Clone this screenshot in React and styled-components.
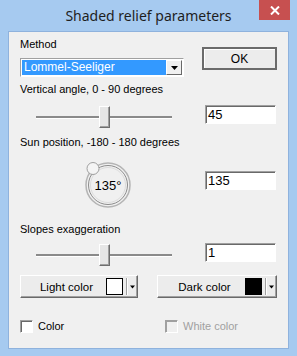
import React from 'react';
import styled, { createGlobalStyle } from 'styled-components';

const Global = createGlobalStyle`
  html, body { margin: 0; padding: 0; background: #a6caf0; }
  * { box-sizing: border-box; }
`;

const Frame = styled.div`
  width: 297px;
  height: 356px;
  background: #a6caf0;
  display: flex;
  flex-direction: column;
  font-family: "Liberation Sans", Arial, sans-serif;
`;

const TitleBar = styled.div`
  height: 31px;
  display: flex;
  align-items: flex-start;
  position: relative;
`;

const Title = styled.div`
  flex: 1;
  text-align: center;
  font-family: "Noto Sans", "Open Sans", sans-serif;
  font-size: 14px;
  line-height: 20px;
  padding-top: 6px;
  color: #1e1e1e;
`;

const Close = styled.div`
  position: absolute;
  right: 7px;
  top: 0;
  width: 31px;
  height: 20px;
  background: #c75050;
  color: #fff;
  display: flex;
  align-items: center;
  justify-content: center;
`;

const Client = styled.div`
  margin: 0 8px 7px 8px;
  flex: 1;
  background: #f0f0f0;
  border: 1px solid #8fb2dd;
  padding: 0 11px 0 11px;
  display: flex;
  flex-direction: column;
  font-size: 11px;
  color: #000;
`;

const Row = styled.div`
  display: flex;
  justify-content: space-between;
  align-items: ${(p) => p.$align || 'flex-start'};
  margin-top: ${(p) => p.$top || 0}px;
  height: ${(p) => p.$h}px;
`;

const Col = styled.div`
  display: flex;
  flex-direction: column;
`;

const Label = styled.div`
  font-size: 11px;
  line-height: 14px;
  height: 14px;
  white-space: nowrap;
  margin-top: ${(p) => p.$top || 0}px;
  color: ${(p) => (p.$disabled ? '#a0a0a0' : '#000')};
`;

const Combo = styled.div`
  margin-top: 7px;
  width: 164px;
  height: 19px;
  border: 1px solid;
  border-color: #a0a0a0 #fff #fff #a0a0a0;
  background: #fff;
  display: flex;
  padding: 1px;
`;

const ComboText = styled.div`
  flex: 1;
  background: #3399ff;
  color: #fff;
  font-size: 12px;
  line-height: 15px;
  padding-left: 2px;
`;

const ComboArrow = styled.div`
  width: 16px;
  background: #f0f0f0;
  border: 1px solid;
  border-color: #fff #696969 #696969 #fff;
  display: flex;
  align-items: center;
  justify-content: center;
`;

const OkButton = styled.div`
  width: 75px;
  height: 23px;
  margin-top: 10px;
  border: 2px solid #6b6b6b;
  background: #ececec;
  box-shadow: inset 1px 1px 0 #fff;
  display: flex;
  align-items: center;
  justify-content: center;
  font-size: 12px;
`;

const Field = styled.div`
  width: 71px;
  height: 19px;
  margin-top: ${(p) => p.$top || 0}px;
  margin-right: 1px;
  background: #fff;
  border: 1px solid;
  border-color: #a0a0a0 #fff #fff #a0a0a0;
  box-shadow: inset 1px 1px 0 #696969;
  font-size: 13px;
  line-height: 15px;
  padding: 1px 0 0 2px;
`;

const SliderBox = styled.div`
  width: 150px;
  height: 24px;
  margin-left: 16px;
  position: relative;
  display: flex;
  align-items: center;
`;

const Track = styled.div`
  width: 136px;
  height: 3px;
  border-top: 2px solid #8a8a8a;
  border-bottom: 1px solid #fff;
`;

const Thumb = styled.div`
  position: absolute;
  left: ${(p) => p.$x}px;
  top: ${(p) => p.$y}px;
  width: 11px;
  height: 22px;
  background: #e6e6e6;
  border: 1px solid;
  border-color: #fff #6e6e6e #6e6e6e #fff;
  box-shadow: inset -1px -1px 0 #a0a0a0;
`;

const DialBox = styled.div`
  width: 50px;
  height: 50px;
  margin-left: 64px;
`;

const SplitButton = styled.div`
  width: ${(p) => p.$w}px;
  height: 23px;
  display: flex;
  align-items: center;
  background: #ececec;
  border: 1px solid;
  border-color: #fff #696969 #696969 #fff;
  box-shadow: inset -1px -1px 0 #a0a0a0;
  font-size: 11.5px;
`;

const SplitLabel = styled.div`
  flex: 1;
  text-align: center;
  padding-left: ${(p) => p.$pad}px;
`;

const Swatch = styled.div`
  width: 17px;
  height: 17px;
  border: 1px solid #000;
  background: ${(p) => p.$color};
  margin-right: 3px;
`;

const SplitDivider = styled.div`
  width: 2px;
  height: 17px;
  border-left: 1px solid #a0a0a0;
  border-right: 1px solid #fff;
`;

const SplitArrow = styled.div`
  width: 8px;
  display: flex;
  justify-content: center;
  margin-right: 1px;
`;

const CheckWrap = styled.div`
  display: flex;
  align-items: center;
  gap: 5px;
  width: ${(p) => p.$w}px;
`;

const Box = styled.div`
  width: 13px;
  height: 13px;
  background: ${(p) => (p.$disabled ? '#f0f0f0' : '#fff')};
  border: 1px solid;
  border-color: #a0a0a0 #fff #fff #a0a0a0;
  box-shadow: inset 1px 1px 0 ${(p) => (p.$disabled ? '#a0a0a0' : '#696969')};
`;

const Arrow = ({ size = 7 }) => (
  <svg width={size} height={4} viewBox="0 0 7 4">
    <path d="M0 0 H7 L3.5 4 Z" fill="#000" />
  </svg>
);

const Slider = ({ pos }) => (
  <SliderBox>
    <Track />
    <Thumb $x={pos} $y={1} />
  </SliderBox>
);

const Dial = () => (
  <DialBox>
    <svg width="50" height="50" viewBox="0 0 50 50">
      <circle cx="24" cy="25" r="22" fill="none" stroke="#b4b4b4" strokeWidth="1.5" />
      <circle cx="24" cy="25" r="19.5" fill="none" stroke="#8c8c8c" strokeWidth="1" />
      <circle cx="24" cy="25" r="17.5" fill="none" stroke="#dcdcdc" strokeWidth="1" />
      <circle cx="9" cy="8.5" r="6" fill="#f4f4f4" stroke="#a0a0a0" strokeWidth="1" />
      <text x="24" y="29.5" textAnchor="middle" fontFamily="Liberation Sans, Arial, sans-serif" fontSize="13" fill="#000">135°</text>
    </svg>
  </DialBox>
);

export default function App() {
  return (
    <Frame>
      <Global />
      <TitleBar>
        <Title>Shaded relief parameters</Title>
        <Close>
          <svg width="10" height="9" viewBox="0 0 10 9">
            <path d="M1 0.5 L9 8.5 M9 0.5 L1 8.5" stroke="#fff" strokeWidth="2" />
          </svg>
        </Close>
      </TitleBar>
      <Client>
        <Row $h={45} $top={5}>
          <Col>
            <Label>Method</Label>
            <Combo>
              <ComboText>Lommel-Seeliger</ComboText>
              <ComboArrow><Arrow /></ComboArrow>
            </Combo>
          </Col>
          <OkButton>OK</OkButton>
        </Row>
        <Label>Vertical angle, 0 - 90 degrees</Label>
        <Row $h={24} $top={9}>
          <Slider pos={63} />
          <Field>45</Field>
        </Row>
        <Label $top={6}>Sun position, -180 - 180 degrees</Label>
        <Row $h={50} $top={11}>
          <Dial />
          <Field $top={11}>135</Field>
        </Row>
        <Label $top={12}>Slopes exaggeration</Label>
        <Row $h={24} $top={7}>
          <Slider pos={63} />
          <Field>1</Field>
        </Row>
        <Row $h={23} $top={8}>
          <SplitButton $w={118}>
            <SplitLabel $pad={6}>Light color</SplitLabel>
            <Swatch $color="#fff" />
            <SplitDivider />
            <SplitArrow><Arrow size={5} /></SplitArrow>
          </SplitButton>
          <SplitButton $w={120}>
            <SplitLabel $pad={6}>Dark color</SplitLabel>
            <Swatch $color="#000" />
            <SplitDivider />
            <SplitArrow><Arrow size={5} /></SplitArrow>
          </SplitButton>
        </Row>
        <Row $h={14} $top={21} $align="center">
          <CheckWrap $w={140}>
            <Box />
            <Label>Color</Label>
          </CheckWrap>
          <CheckWrap $w={112}>
            <Box $disabled />
            <Label $disabled>White color</Label>
          </CheckWrap>
        </Row>
      </Client>
    </Frame>
  );
}
